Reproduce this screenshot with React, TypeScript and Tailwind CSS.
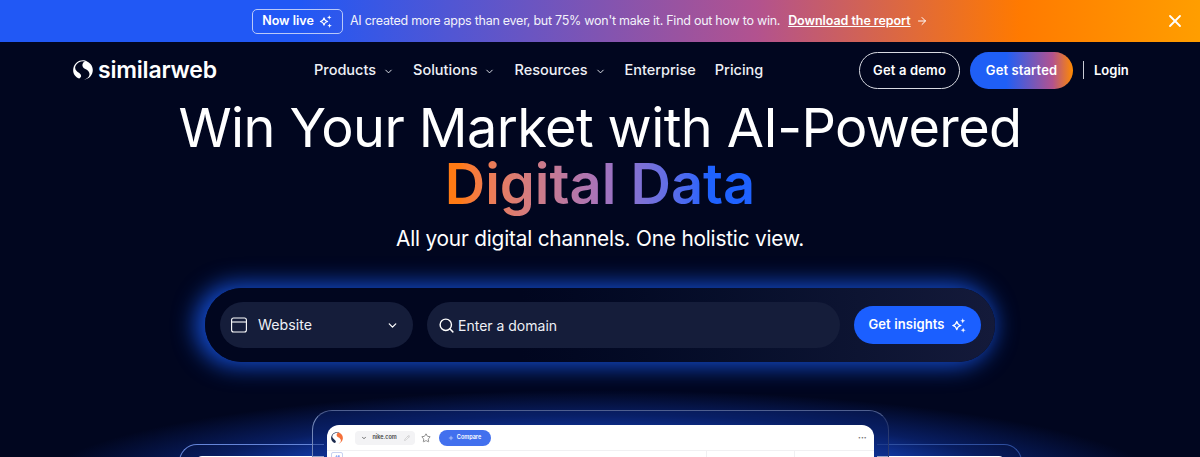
import { ChevronDown, Search, X, ArrowRight, Star, Pencil, Plus, Sparkles as SmallSpark } from 'lucide-react'

function Sparkles({ className }: { className: string }) {
  return (
    <svg viewBox="0 0 20 20" fill="none" className={className}>
      <path d="M8 5.2 C8.6 8 9.8 9.3 12.8 10 C9.8 10.7 8.6 12 8 14.8 C7.4 12 6.2 10.7 3.2 10 C6.2 9.3 7.4 8 8 5.2Z" stroke="currentColor" strokeWidth="1.5" strokeLinejoin="round" />
      <path d="M15 1.5 L15.8 3.7 L18 4.5 L15.8 5.3 L15 7.5 L14.2 5.3 L12 4.5 L14.2 3.7Z" fill="currentColor" />
      <path d="M15.5 12.5 L16.3 14.7 L18.5 15.5 L16.3 16.3 L15.5 18.5 L14.7 16.3 L12.5 15.5 L14.7 14.7Z" fill="currentColor" />
    </svg>
  )
}

function SwirlLogo({ className, top, bottom }: { className: string; top: string; bottom: string }) {
  return (
    <svg viewBox="0 0 20 20" className={className}>
      <path d="M12.6 1.2 C8 0.4 2.6 2.6 1.8 7.6 C1.2 11.2 4.4 12.6 6.6 13.6 C8.4 14.4 9.6 15.4 9.4 17 C9.2 18 8.6 18.6 8 19 C3.4 18.4 0.2 15 0.2 10 C0.2 5 4 0.4 10 0.2 C10.9 0.2 11.8 0.6 12.6 1.2Z" fill={bottom} transform="rotate(12 10 10)" />
      <path d="M12.4 1 C16.8 2 19.8 5.6 19.8 10 C19.8 14.8 16.2 19.2 11 19.6 C16 18.4 17.8 14.8 15.6 11.6 C13.6 8.8 9.8 9 9.4 5.6 C9.2 3.6 10.6 1.8 12.4 1Z" fill={top} />
    </svg>
  )
}

function NavItem({ label, menu }: { label: string; menu?: boolean }) {
  return (
    <a className="flex items-center gap-[7px] text-[14.5px] font-medium text-[#eef0f6]">
      {label}
      {menu && <ChevronDown className="size-[11px] mt-[2px]" strokeWidth={2} />}
    </a>
  )
}

export default function App() {
  return (
    <div className="relative h-[457px] w-[1200px] overflow-hidden bg-[#01061f] text-white font-['Inter',sans-serif]">
      {/* promo strip */}
      <div className="relative flex h-[42px] items-center bg-[linear-gradient(90deg,#2158f5_25%,#b2528f_63%,#ff7a00_85%,#ff9e00_100%)] pl-[252px] text-[12.5px]">
        <span className="flex h-[25px] w-[91px] items-center justify-center gap-[4px] rounded-[5px] border border-[#b9c9f8] font-semibold">
          Now live
          <Sparkles className="size-[15px]" />
        </span>
        <span className="ml-[7px] tracking-[-0.26px] text-[#f2f2fa]">AI created more apps than ever, but 75% won't make it. Find out how to win.</span>
        <a className="ml-[8px] font-semibold tracking-[-0.05px] underline">Download the report</a>
        <ArrowRight className="ml-[5px] size-[12px]" />
        <X className="absolute right-[15px] top-[11px] size-[20px]" strokeWidth={2.2} />
      </div>

      {/* nav */}
      <nav className="flex h-[56px] items-center pl-[73px]">
        <a className="flex w-[144px] items-center gap-[5px] text-[23px] font-semibold tracking-[-0.2px]">
          <SwirlLogo className="size-[20px]" top="#ffffff" bottom="#ffffff" />
          similarweb
        </a>
        <div className="ml-[97px] flex w-[447px] items-center gap-[19px]">
          <NavItem label="Products" menu />
          <NavItem label="Solutions" menu />
          <NavItem label="Resources" menu />
          <NavItem label="Enterprise" />
          <NavItem label="Pricing" />
        </div>
        <a className="ml-[98px] flex h-[37px] w-[101px] items-center justify-center rounded-full border border-[#d8dae2] pt-px text-[13px] font-semibold tracking-[0.15px]">Get a demo</a>
        <a className="ml-[10px] flex h-[37px] w-[103px] items-center justify-center rounded-full bg-[linear-gradient(90deg,#1f5ff6_35%,#b2528f_80%,#ff8a00_100%)] pt-px text-[13px] font-semibold tracking-[0.1px]">Get started</a>
        <span className="ml-[10px] h-[18px] w-px bg-[#c9ccd6]" />
        <a className="ml-[10px] pt-px text-[13px] font-semibold">Login</a>
      </nav>

      {/* hero */}
      <section className="flex flex-col items-center">
        <h1 className="mt-[2px] text-[54px] leading-[56px] font-normal tracking-[-0.6px] text-white">Win Your Market with AI-Powered</h1>
        <p className="-mb-[10px] bg-gradient-to-r from-[#ff7a14] from-[5%] via-[#a873ba] via-[50%] to-[#1f62ff] to-[85%] bg-clip-text pb-[10px] text-[56px] leading-[56px] font-semibold text-transparent">Digital Data</p>
        <p className="mt-[13px] text-[20.8px] leading-[28px] tracking-[-0.2px] text-white">All your digital channels. One holistic view.</p>

        {/* search bar */}
        <div className="mt-[35px] flex h-[74px] w-[790px] items-center rounded-full bg-gradient-to-r from-[#01061f] from-[40%] to-[#141a3a] pl-[15px] shadow-[-5px_0_22px_5px_rgba(24,90,240,0.8)]">
          <div className="flex h-[46px] w-[193px] items-center rounded-full bg-[#151d3a] pl-[11px] pr-[14px]">
            <svg viewBox="0 0 16 16" fill="none" stroke="currentColor" strokeWidth="1.1" className="size-[16px]">
              <rect x="0.6" y="1" width="14.8" height="14" rx="2" />
              <path d="M0.6 5h14.8" />
            </svg>
            <span className="ml-[11px] text-[14.2px] text-[#eef0f6]">Website</span>
            <ChevronDown className="ml-auto size-[13px]" strokeWidth={2.4} />
          </div>
          <div className="ml-[14px] flex h-[46px] w-[413px] items-center gap-[3px] rounded-full bg-[#151d3a] pl-[11px]">
            <Search className="size-[17px]" />
            <span className="text-[14px] text-[#eef0f6]">Enter a domain</span>
          </div>
          <button className="ml-[14px] flex h-[38px] w-[127px] items-center justify-center gap-[5px] rounded-full bg-[#1b5fff] text-[13px] font-semibold tracking-[0.1px]">
            Get insights
            <Sparkles className="size-[17px]" />
          </button>
        </div>

        {/* product preview */}
        <div className="relative mt-[48px] w-[843px] before:absolute before:-left-[148px] before:-right-[148px] before:-top-[20px] before:h-[100px] before:bg-[radial-gradient(ellipse_50%_100%_at_50%_100%,rgba(27,84,235,1),rgba(24,76,215,0.95)_50%,rgba(14,48,150,0.55)_75%,rgba(1,6,31,0)_100%)]">
          <div className="relative flex items-start justify-center">
            <div className="mt-[34px] -mr-[12px] h-[40px] w-[145px] rounded-tl-[18px] border-t border-l border-[#6585d8] pl-[16px] pt-[11px]">
              <div className="h-[20px] rounded-tl-[6px] bg-white" />
            </div>
            <div className="relative z-10 h-[60px] w-[577px] rounded-t-[20px] border-t border-r border-l border-t-[#4f5f8f] border-r-[#2a3a70] border-l-[#7488b8] bg-[#0a2270]/40 px-[14px] pt-[14px]">
              <div className="h-[40px] rounded-t-[12px] bg-white text-[#444]">
                <div className="flex h-[26px] items-center border-b border-[#f0f0f2] pl-[4px] pr-[7px]">
                  <SwirlLogo className="size-[12px]" top="#f5703a" bottom="#1b2a4e" />
                  <span className="ml-[12px] flex h-[14px] w-[60px] items-center rounded-[4px] bg-[#f3f3f5] pl-[6px]">
                    <ChevronDown className="size-[6px]" strokeWidth={3} />
                    <span className="ml-[6px] text-[5.5px] font-semibold">nike.com</span>
                    <Pencil className="ml-auto mr-[5px] size-[6px] text-[#bbb]" />
                  </span>
                  <Star className="ml-[6px] size-[10px] text-[#777]" />
                  <span className="ml-[8px] flex h-[16px] w-[52px] items-center justify-center gap-[3px] rounded-full bg-[#4270ee] text-[5.5px] font-semibold text-white">
                    <Plus className="size-[6px]" />
                    Compare
                  </span>
                  <span className="ml-auto text-[5px] leading-none text-[#777]">•••</span>
                </div>
                <div className="flex h-[14px]">
                  <span className="ml-[4px] mt-px flex size-[12px] items-center justify-center rounded-[2px] border border-[#c8d2f0] text-[#4270ee]">
                    <SmallSpark className="size-[7px]" />
                  </span>
                  <span className="ml-[363px] h-full w-px bg-[#f0f0f2]" />
                  <span className="ml-[87px] h-full w-px bg-[#f0f0f2]" />
                </div>
              </div>
            </div>
            <div className="mt-[34px] -ml-[12px] h-[40px] w-[145px] rounded-tr-[18px] border-t border-r border-[#2f4f9f] pr-[16px] pt-[11px]">
              <div className="h-[20px] rounded-tr-[6px] bg-white" />
            </div>
          </div>
        </div>
      </section>
    </div>
  )
}
